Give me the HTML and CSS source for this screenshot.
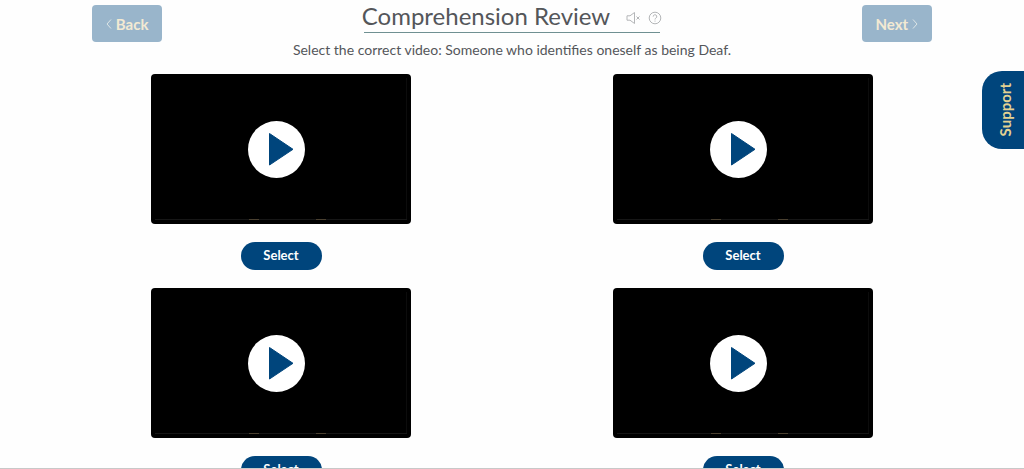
FILE: index.html
```html
<!DOCTYPE html>
<html lang="en">
<head>
<meta charset="utf-8">
<title>Comprehension Review</title>
<link rel="stylesheet" href="styles.css">
</head>
<body>
<svg class="sprite" aria-hidden="true">
  <symbol id="play" viewBox="0 0 58 58">
    <circle cx="28.500" cy="29.500" r="28.500" fill="#fff"/>
    <path d="M21.500 13.500 L45 29.300 L21.500 45 Z" fill="#00457c" stroke="#00457c" stroke-width="1" stroke-linejoin="round"/>
  </symbol>
</svg>
<main class="page">
  <header class="header">
    <button class="nav" type="button" disabled>
      <svg class="chevron" viewBox="0 0 6 10"><path d="M5 .5 1 5l4 4.500"/></svg>Back
    </button>
    <div class="heading">
      <h1 class="title">Comprehension Review</h1>
      <button class="tool" type="button" aria-label="Sound off">
        <svg viewBox="0 0 14 14"><path d="M1 4.800h3L8.500 1.500v11L4 9.200H1zM10.500 5.500l3 3m0-3l-3 3"/></svg>
      </button>
      <button class="tool" type="button" aria-label="Help">
        <svg viewBox="0 0 14 14"><circle cx="7" cy="7" r="5.800"/><path d="M5.200 5.600a1.800 1.800 0 1 1 2.700 1.500Q7 7.600 7 8.500M7 9.600v1"/></svg>
      </button>
    </div>
    <button class="nav" type="button" disabled>
      Next<svg class="chevron" viewBox="0 0 6 10"><path d="M1 .5 5 5l-4 4.500"/></svg>
    </button>
  </header>
  <p class="question">Select the correct video: Someone who identifies oneself as being Deaf.</p>
  <section class="choices">
    <div class="choice">
      <button class="video" type="button" aria-label="Play video 1"><svg class="play"><use href="#play"/></svg></button>
      <button class="select" type="button">Select</button>
    </div>
    <div class="choice">
      <button class="video" type="button" aria-label="Play video 2"><svg class="play"><use href="#play"/></svg></button>
      <button class="select" type="button">Select</button>
    </div>
    <div class="choice">
      <button class="video" type="button" aria-label="Play video 3"><svg class="play"><use href="#play"/></svg></button>
      <button class="select" type="button">Select</button>
    </div>
    <div class="choice">
      <button class="video" type="button" aria-label="Play video 4"><svg class="play"><use href="#play"/></svg></button>
      <button class="select" type="button">Select</button>
    </div>
  </section>
</main>
<button class="support" type="button">Support</button>
</body>
</html>
```
FILE: styles.css
```css
* { box-sizing: border-box; }
body {
  margin: 0;
  background: #fefefe;
  color: #54565a;
  font-family: Lato, "Liberation Sans", sans-serif;
}
button {
  margin: 0;
  padding: 0;
  border: 0;
  font-family: inherit;
  cursor: pointer;
}
.sprite { display: none; }
.page {
  height: 100vh;
  overflow: hidden;
  border-bottom: 1px solid #c8c8c8;
}
.header {
  display: flex;
  justify-content: space-between;
  align-items: flex-start;
  padding: 0 9%;
}
.nav {
  display: flex;
  align-items: center;
  justify-content: center;
  gap: 4px;
  width: 70px;
  height: 37px;
  margin-top: 5px;
  border-radius: 4px;
  background: #99b5cb;
  color: #f3ead3;
  font-size: 15px;
  font-weight: 700;
}
.chevron {
  width: 6px;
  height: 10px;
  fill: none;
  stroke: #dde5e6;
  stroke-width: 1;
}
.heading {
  display: flex;
  align-items: center;
  gap: 8px;
  height: 33px;
  border-bottom: 1px solid #6f9092;
}
.title {
  margin: 0 8px 0 -2px;
  font-size: 24px;
  font-weight: 400;
  line-height: 30px;
}
.tool {
  width: 14px;
  height: 14px;
  margin-top: 4px;
  background: none;
}
.tool:last-child { margin-right: -2px; }
.tool svg {
  display: block;
  width: 14px;
  height: 14px;
  fill: none;
  stroke: #b4b6b8;
  stroke-width: 1;
}
.question {
  margin: 0;
  font-size: 14px;
  line-height: 16px;
  text-align: center;
}
.choices {
  display: grid;
  grid-template-columns: 1fr 1fr;
  row-gap: 18px;
  padding: 16px 50px 0;
}
.choice {
  display: flex;
  flex-direction: column;
  align-items: center;
  gap: 18px;
}
.video {
  display: flex;
  align-items: center;
  justify-content: center;
  width: 260px;
  height: 150px;
  padding-right: 8px;
  border-radius: 4px;
  background:
    linear-gradient(#4a4030, #4a4030) 98px 145px / 10px 1px no-repeat,
    linear-gradient(#4a4030, #4a4030) 165px 145px / 10px 1px no-repeat,
    linear-gradient(#161616, #161616) 4px 145px / 252px 1px no-repeat,
    linear-gradient(#0c0c0c, #0c0c0c) 255px 4px / 1px 142px no-repeat,
    #000;
}
.play {
  width: 58px;
  height: 58px;
}
.select {
  width: 81px;
  height: 28px;
  padding-bottom: 2px;
  border-radius: 14px;
  background: #00457c;
  color: #fff;
  font-size: 13px;
  font-weight: 700;
}
.support {
  position: fixed;
  top: 71px;
  right: 0;
  width: 42px;
  height: 78px;
  padding-left: 4px;
  border-radius: 20px 0 0 20px;
  background: #00457c;
  color: #e3d292;
  font-size: 15px;
  font-weight: 700;
  writing-mode: sideways-lr;
}
```
